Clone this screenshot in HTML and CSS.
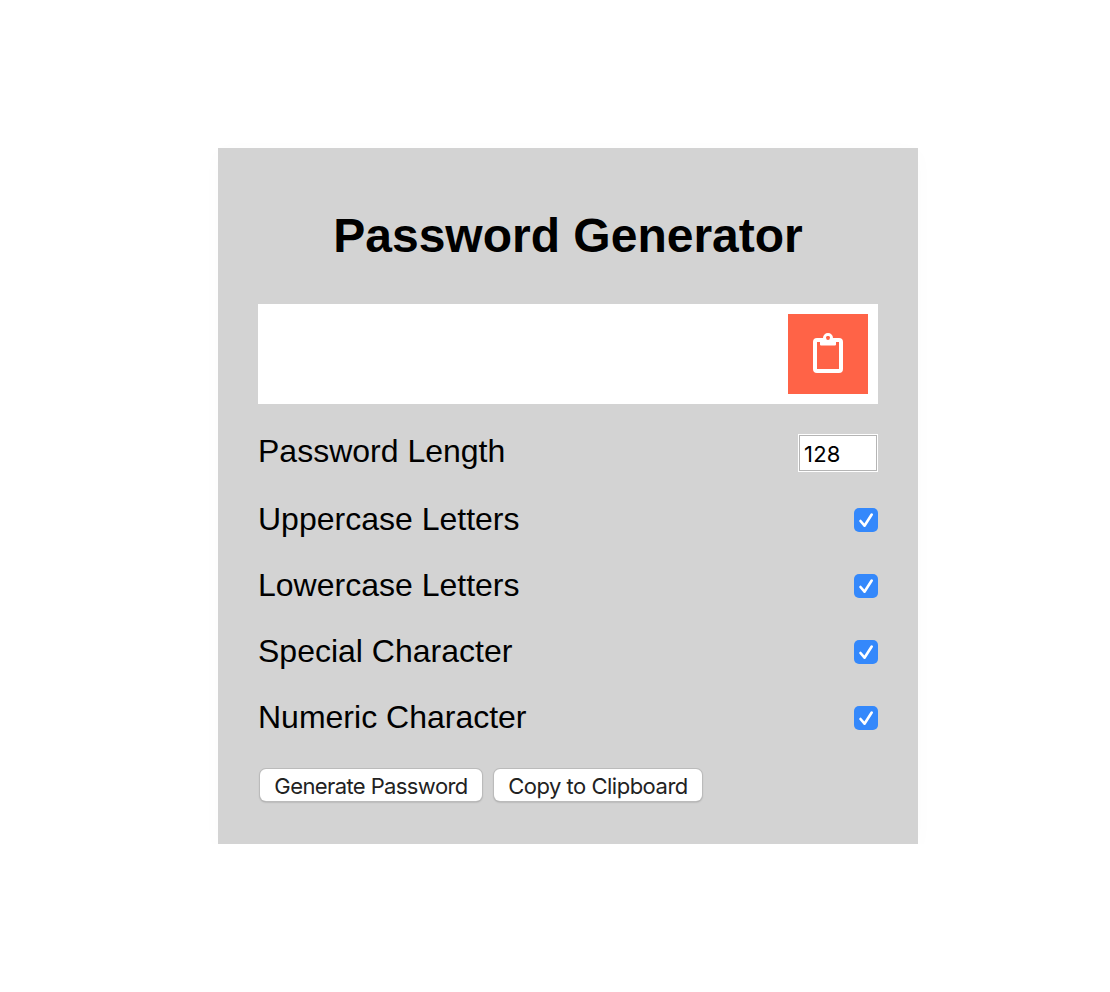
FILE: index.html
```html
<!DOCTYPE html>
<html lang="en">
<head>
<meta charset="utf-8">
<title>Password Generator</title>
<link rel="stylesheet" href="styles.css">
</head>
<body>
<main class="card">
  <h1 class="title">Password Generator</h1>
  <div class="result">
    <button class="clipboard" aria-label="Copy">
      <svg width="32" height="42" viewBox="0 0 32 42"><rect x="3" y="7" width="26" height="31" rx="2" fill="none" stroke="#fff" stroke-width="4"/><path fill="#fff" fill-rule="evenodd" d="M8 5H11A5 5 0 0 1 21 5H24V11.500Q24 12.500 23 12.500H9Q8 12.500 8 11.500ZM16 3.100A1.900 1.900 0 1 0 16 6.900A1.900 1.900 0 1 0 16 3.100Z"/><circle cx="16" cy="5" r="1.900" fill="#ff6347"/></svg>
    </button>
  </div>
  <div class="row length"><label for="len">Password Length</label><input id="len" class="number" type="text" value="128"></div>
  <div class="row"><span class="label">Uppercase Letters</span><span class="check"><svg width="24" height="24" viewBox="0 0 24 24"><path d="M6.500 13L10.500 17.700L17.700 6.500"/></svg></span></div>
  <div class="row"><span class="label">Lowercase Letters</span><span class="check"><svg width="24" height="24" viewBox="0 0 24 24"><path d="M6.500 13L10.500 17.700L17.700 6.500"/></svg></span></div>
  <div class="row"><span class="label">Special Character</span><span class="check"><svg width="24" height="24" viewBox="0 0 24 24"><path d="M6.500 13L10.500 17.700L17.700 6.500"/></svg></span></div>
  <div class="row"><span class="label">Numeric Character</span><span class="check"><svg width="24" height="24" viewBox="0 0 24 24"><path d="M6.500 13L10.500 17.700L17.700 6.500"/></svg></span></div>
  <div class="actions"><button class="btn generate">Generate Password</button><button class="btn copy">Copy to Clipboard</button></div>
</main>
</body>
</html>
```
FILE: styles.css
```css
* { box-sizing: border-box; }
body { margin: 0; padding: 148px 0 0 218px; background: #fff; font-family: "Liberation Sans", Arial, sans-serif; color: #000; }
.card { width: 700px; height: 696px; padding: 60px 40px 0; background: #d3d3d3; box-shadow: 0 4px 20px rgba(0,0,0,.02); }
.title { margin: 0 0 40px; height: 56px; line-height: 56px; font-size: 48px; text-align: center; white-space: nowrap; }
.result { height: 100px; padding: 10px; background: #fff; display: flex; justify-content: flex-end; }
.clipboard { width: 80px; height: 80px; padding: 0; border: 0; background: #ff6347; display: flex; align-items: center; justify-content: center; }
.row { height: 36px; margin-bottom: 30px; display: flex; align-items: center; justify-content: space-between; font-size: 32px; line-height: 36px; }
.row label { line-height: 34px; }
.label { padding-bottom: 2px; }
.length { height: 38px; margin-top: 30px; align-items: flex-start; }
.number { width: 80px; height: 38px; border: 2px solid #fff; outline: 1px solid #b5b5b5; outline-offset: -2px; padding: 2px 4px 0; font: 22px Inter, sans-serif; letter-spacing: .2px; background: #fff; color: #000; }
.check { width: 24px; height: 24px; border-radius: 5px; background: #3488fb; display: flex; }
.check path { fill: none; stroke: #fff; stroke-width: 2.6; stroke-linecap: round; stroke-linejoin: round; }
.actions { display: flex; gap: 12px; padding: 3px 2px 0; }
.btn { height: 32px; padding: 2px 0 0; border: 0; border-radius: 6px; background: #fff; color: #222; box-shadow: 0 0 0 1px #bbb, 0 1px 2px #888; font: 22px/30px Inter, sans-serif; white-space: nowrap; }
.generate { width: 222px; letter-spacing: -.6px; }
.copy { width: 208px; letter-spacing: -.5px; }
```
